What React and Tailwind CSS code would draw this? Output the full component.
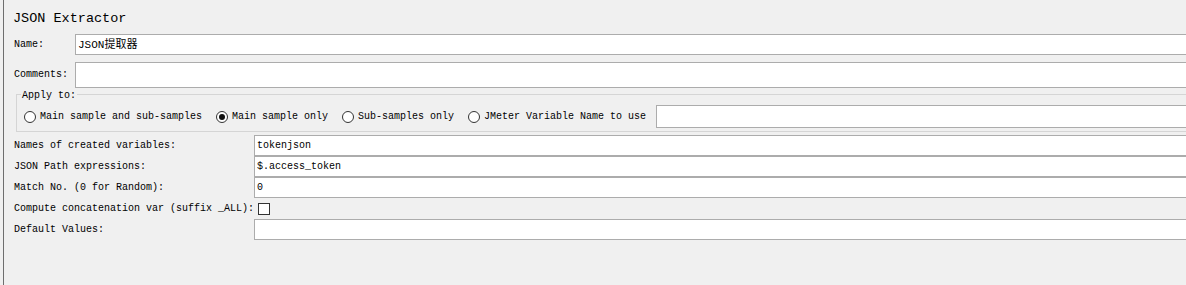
import React from "react";

const mono = { fontFamily: '"Liberation Mono", "Noto Sans CJK SC", monospace' };

function Radio({ label, checked, last }) {
  return (
    <div className={"flex items-center " + (last ? "" : "mr-[14px]")}>
      <div className="w-[12px] h-[12px] rounded-full border border-[#333333] bg-white flex items-center justify-center">
        {checked && <div className="w-[6px] h-[6px] rounded-full bg-[#111111]" />}
      </div>
      <span className="ml-[4px] text-[10px] leading-[12px] text-black whitespace-pre">{label}</span>
    </div>
  );
}

function Field({ value, h = "h-[21px]", text = "text-[10px]" }) {
  return (
    <div className={"flex-1 border border-[#acacac] bg-white flex items-center pl-[2px] " + h}>
      <span className={text + " leading-[14px] text-black whitespace-pre"}>{value}</span>
    </div>
  );
}

function Row({ label, children }) {
  return (
    <div className="flex h-[21px] items-center pl-[10px]">
      <div className="w-[240px] text-[10px] leading-[12px] text-black whitespace-pre">{label}</div>
      {children}
    </div>
  );
}

export default function App() {
  return (
    <div className="w-[1186px] h-[285px] bg-[#f0f0f0] overflow-hidden flex" style={mono}>
      <div className="w-[3px] shrink-0" />
      <div className="w-px shrink-0 bg-[#6e6e6e]" />
      <div className="w-[1240px] shrink-0 flex flex-col">
        <div className="h-[34px] flex items-center pt-[3px] pl-[9px]">
          <span className="text-[13.5px] leading-[18px] text-black">JSON Extractor</span>
        </div>
        <div className="flex h-[21px] items-center pl-[10px]">
          <div className="w-[61px] text-[10px] leading-[12px] text-black">Name:</div>
          <Field value="JSON提取器" text="text-[11px]" />
        </div>
        <div className="flex h-[26px] items-center pl-[10px] mt-[7px]">
          <div className="w-[61px] text-[10px] leading-[12px] text-black">Comments:</div>
          <Field value="" h="h-[26px]" />
        </div>
        <div className="relative ml-[12px] mt-[6px] border border-[#d5d5d5]">
          <span className="absolute top-[-5px] left-[4px] px-[1px] bg-[#f0f0f0] text-[10px] leading-[12px] text-black">
            Apply to:
          </span>
          <div className="flex items-center pt-[10px] pb-[3px] pl-[7px]">
            <Radio label="Main sample and sub-samples" />
            <Radio label="Main sample only" checked />
            <Radio label="Sub-samples only" />
            <Radio label="JMeter Variable Name to use" last />
            <div className="ml-[10px] flex-1 h-[23px] border border-[#acacac] bg-white" />
          </div>
        </div>
        <div className="mt-[3px] flex flex-col">
          <Row label="Names of created variables:">
            <Field value="tokenjson" />
          </Row>
          <Row label="JSON Path expressions:">
            <Field value="$.access_token" />
          </Row>
          <Row label="Match No. (0 for Random):">
            <Field value="0" />
          </Row>
          <Row label="Compute concatenation var (suffix _ALL):">
            <div className="ml-[4px] w-[12px] h-[12px] border border-[#333333] bg-white" />
          </Row>
          <Row label="Default Values:">
            <Field value="" />
          </Row>
        </div>
      </div>
    </div>
  );
}
